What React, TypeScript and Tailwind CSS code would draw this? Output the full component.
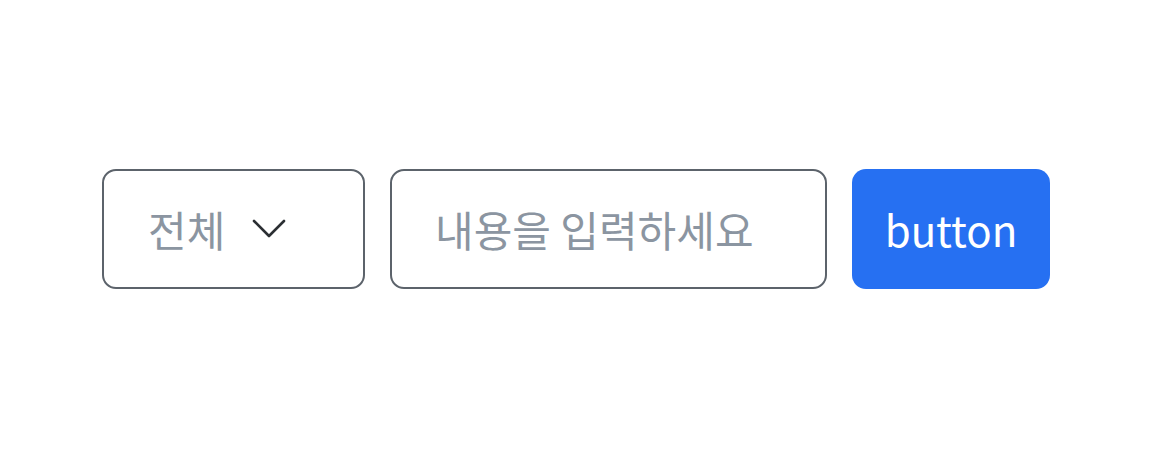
import { useState } from "react";

function Chevron() {
  return (
    <svg width="34" height="22" viewBox="0 0 34 22" fill="none" className="shrink-0">
      <path d="M2 3 L17 18 L32 3" stroke="#2b2f33" strokeWidth="2.6" strokeLinecap="round" strokeLinejoin="round" />
    </svg>
  );
}

export default function App() {
  const [query, setQuery] = useState("");

  return (
    <div
      className="flex h-[457px] w-full items-center justify-center gap-[25px] bg-white"
      style={{ fontFamily: '"Noto Sans CJK KR", "Noto Sans", sans-serif' }}
    >
      <button className="flex h-[120px] w-[263px] items-center gap-[27px] rounded-[14px] border-[2.5px] border-[#5c636b] bg-white pl-[44px] text-[42px] text-[#8b95a1]">
        <span>전체</span>
        <Chevron />
      </button>
      <input
        value={query}
        onChange={(e) => setQuery(e.target.value)}
        placeholder="내용을 입력하세요"
        className="h-[120px] w-[437px] rounded-[14px] border-[2.5px] border-[#5c636b] bg-white pl-[43px] text-[42px] text-[#333d4b] outline-none placeholder:text-[#8b95a1]"
      />
      <button className="flex h-[120px] w-[198px] items-center justify-center rounded-[14px] bg-[#2670f2] text-[42px] text-white">
        button
      </button>
    </div>
  );
}
